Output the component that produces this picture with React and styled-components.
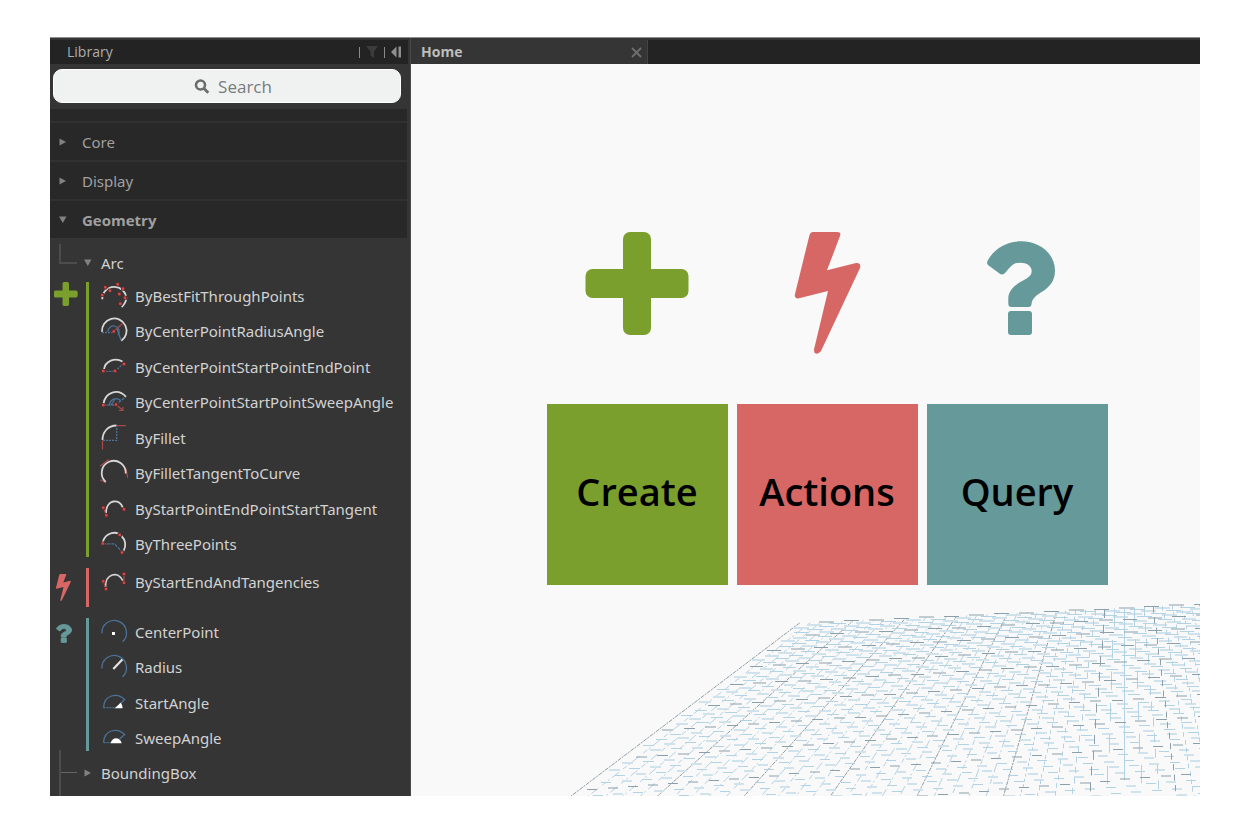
import React from 'react';
import styled, { createGlobalStyle } from 'styled-components';

const GREEN = '#7b9f2d';
const RED = '#d66765';
const TEAL = '#66999a';

const GlobalStyle = createGlobalStyle`
  *, *::before, *::after { box-sizing: border-box; }
  body {
    margin: 0;
    background: #fff;
    font-family: "Open Sans", "Noto Sans", sans-serif;
  }
  button { font: inherit; color: inherit; background: none; border: 0; padding: 0; cursor: pointer; }
  ul { list-style: none; margin: 0; padding: 0; }
  svg { display: block; }
`;

const Page = styled.div`
  min-height: 100vh;
  padding: 37px 50px;
  display: flex;
`;

const AppWindow = styled.div`
  flex: 1;
  display: grid;
  grid-template-columns: 361px minmax(0, 1fr);
  border-top: 1px solid #8f8f8f;
  background: #353535;
  overflow: hidden;
`;

const Sidebar = styled.aside`
  padding-top: 2px;
  border-right: 1px solid #4a4a4a;
  color: #d2d2d2;
  font-family: "Noto Sans", "Open Sans", sans-serif;
  font-size: 15px;
  line-height: 20px;
`;

const SidebarBar = styled.header`
  height: 24px;
  margin-right: 2px;
  padding: 0 6px 0 17px;
  display: flex;
  align-items: center;
  justify-content: space-between;
  background: #232323;
  color: #adadad;
`;

const BarTitle = styled.h1`
  margin: 0;
  font-family: "Open Sans", sans-serif;
  font-size: 14px;
  font-weight: 400;
`;

const BarTools = styled.div`
  display: flex;
  align-items: center;
  gap: 5px;
`;

const Divider = styled.span`
  width: 1px;
  height: 11px;
  background: #8a8a8a;
`;

const SearchZone = styled.div`
  height: 45px;
  padding: 5px 9px 6px 3px;
`;

const SearchBox = styled.label`
  height: 34px;
  padding: 1px 0 0 12px;
  display: flex;
  align-items: center;
  justify-content: center;
  gap: 8px;
  border: 1px solid #fff;
  border-radius: 9px;
  background: #f0f2f1;
`;

const SearchInput = styled.input`
  field-sizing: content;
  min-width: 52px;
  padding: 0;
  border: 0;
  outline: 0;
  background: none;
  font: 17px/24px "Open Sans", sans-serif;
  color: #6f7476;
  &::placeholder { color: #777b7d; opacity: 1; }
`;

const Sections = styled.div`
  margin-right: 3px;
  padding-top: 12px;
  background: #282828;
`;

const SectionButton = styled.button`
  width: 100%;
  height: 39px;
  padding: 0 0 0 8px;
  display: flex;
  align-items: center;
  gap: 14px;
  border-top: 2px solid #313131;
  color: #a0a0a0;
  && {
    font-family: ${p => (p.$open ? '"Open Sans", sans-serif' : 'inherit')};
    font-weight: ${p => (p.$open ? 700 : 400)};
  }
`;

const TreeRow = styled.div`
  height: ${p => (p.$last ? 39 : 40)}px;
  padding: ${p => (p.$last ? '0 0 6px 9px' : '10px 0 0 9px')};
  display: flex;
  align-items: center;
`;

const ElbowLine = styled.span`
  width: 18px;
  height: 20px;
  margin-bottom: 18px;
  border-left: 2px solid #4c4c4c;
  border-bottom: 2px solid #4c4c4c;
`;

const BranchLine = styled.span`
  width: 18px;
  height: 46px;
  flex: none;
  display: flex;
  align-items: center;
  border-left: 2px solid #4c4c4c;
  &::before { content: ""; flex: 1; height: 1px; background: #666; }
`;

const TreeButton = styled.button`
  padding-left: 6px;
  display: flex;
  align-items: center;
  gap: 8px;
`;

const Groups = styled.div`
  display: flex;
  flex-direction: column;
  gap: 2px;
`;

const Group = styled.section`
  display: grid;
  grid-template-columns: 36px 3px 1fr;
  min-height: 48px;
`;

const Mark = styled.div`
  padding: ${p => p.$top}px 0 0 ${p => p.$left}px;
`;

const GroupBar = styled.span`
  margin: 4px 0 5px;
  background: ${p => p.$color};
`;

const NodeList = styled.ul`
  height: ${p => p.$height}px;
  padding-left: 12px;
  display: flex;
  flex-direction: column;
`;

const NodeItem = styled.li`
  flex: 1;
  display: flex;
`;

const NodeButton = styled.button`
  display: flex;
  align-items: center;
  gap: 8px;
  white-space: nowrap;
`;

const Main = styled.main`
  padding-top: 2px;
  display: flex;
  flex-direction: column;
`;

const TabStrip = styled.nav`
  height: 24px;
  display: flex;
  background: #232323;
`;

const Tab = styled.div`
  width: 237px;
  padding: 0 5px 0 10px;
  display: flex;
  align-items: center;
  justify-content: space-between;
  border-right: 1px solid #444;
  background: #353535;
  color: #bdbdbd;
  font-size: 14px;
  line-height: 20px;
  font-weight: 700;
`;

const Workspace = styled.div`
  flex: 1;
  display: flex;
  flex-direction: column;
  justify-content: space-between;
  background: #f9f9f9;
`;

const Categories = styled.div`
  padding: 168px 0 15px 43px;
  display: flex;
  justify-content: center;
  gap: 9px;
`;

const Category = styled.div`
  display: flex;
  flex-direction: column;
  gap: 50px;
`;

const Tile = styled.div`
  width: 181px;
  height: 181px;
  display: flex;
  align-items: center;
  justify-content: center;
  padding-bottom: 8px;
  background: ${p => p.$color};
  color: #000;
  font-size: 38px;
  font-weight: 600;
`;

/* The three category symbols, each drawn on a 181 x 122 field. */
const SYMBOLS = {
  create: {
    color: GREEN,
    tight: '39 0 104 103',
    shape: (
      <>
        <rect x="76" y="0" width="28" height="103" rx="7" />
        <rect x="38.5" y="37" width="103" height="29" rx="7" />
      </>
    ),
  },
  actions: {
    color: RED,
    tight: '58 0 66 122',
    shape: (
      <path d="M76 0H100Q104.5 0 103 4L90 38.3L119 31Q124.5 30.5 123 36L84 119Q82 121.7 79.5 121.7Q76.5 121 77 117.5L91 59L61 66.5Q57 66 58 62L72.5 3Q73.5 0 76 0Z" />
    ),
  },
  query: {
    color: TEAL,
    tight: '58 7 72 98',
    outline: 4,
    shape: (
      <>
        <path d="M60.5 29C66 18 78 9.3 94.3 9.3C112 9.3 128 21 128 38.7C128 49 122.5 55.5 113 61C107 65 105 68 104.7 71.3Q104.5 75 101.5 75H84.5Q81.3 75 81.3 71.5V66.3C81.3 60 85.5 55.5 91 51.5C97 47 104.7 46 104.7 39C104.7 34 100 30.7 93 30.7C87.5 30.7 84.5 33 78.5 40.5Q75.5 44 72.5 41.5L61 33Q59.5 31.5 60.5 29Z" />
        <rect x="81" y="79" width="24" height="24" rx="3" />
      </>
    ),
  },
};

const Symbol = ({ kind }) => (
  <svg width="181" height="122" viewBox="0 0 181 122" fill={SYMBOLS[kind].color} aria-hidden="true">
    {SYMBOLS[kind].shape}
  </svg>
);

const SmallSymbol = ({ kind, width, height }) => (
  <svg
    width={width}
    height={height}
    viewBox={SYMBOLS[kind].tight}
    preserveAspectRatio="none"
    fill={SYMBOLS[kind].color}
    stroke={SYMBOLS[kind].color}
    strokeWidth={SYMBOLS[kind].outline || 0}
    aria-hidden="true"
  >
    {SYMBOLS[kind].shape}
  </svg>
);

const Caret = ({ open }) => (
  <svg width="10" height="10" viewBox="0 0 10 10" fill="#828282" aria-hidden="true">
    {open ? <path d="M1 1.5H8.5L4.8 8Z" /> : <path d="M1.5 1.5L8 5L1.5 8.5Z" />}
  </svg>
);

/* Pieces shared by the node icons */
const White = ({ d }) => <path d={d} stroke="#d6d6d6" strokeWidth="1.8" />;
const Blue = ({ d, dash }) => <path d={d} stroke="#4c7299" strokeWidth="1.3" strokeDasharray={dash} />;
const RedLine = ({ d }) => <path d={d} stroke="#a94a4a" strokeWidth="1.2" />;
const Dots = ({ at }) => at.map(([x, y]) => (
  <g key={`${x} ${y}`}>
    <rect x={x - 2} y={y - 2} width="4" height="4" fill="#5a2b2b" />
    <rect x={x - 1.2} y={y - 1.2} width="2.4" height="2.4" fill="#d34b4b" />
  </g>
));

const BIG_ARC = 'M.9 15.5A12.3 12.3 0 1 1 21.5 23.8';

const NODE_ICONS = {
  bestFit: (
    <>
      <path d="M1.3 17.3A12 12 0 0 1 25.3 16.3Q25 21 20.7 25" stroke="#d6d6d6" strokeWidth="1.8" />
      <Dots at={[[1.3, 13], [4.3, 5.3], [9, 8.7], [16.7, 2.3], [22, 6.7], [18.3, 12], [24, 15.7], [19.3, 21.7]]} />
    </>
  ),
  radiusAngle: (
    <>
      <White d="M1 14.8A12.3 12.3 0 1 1 20.3 23.8" />
      <Blue d="M7 14.5A5.6 5.6 0 1 1 17 18" />
      <Blue d="M1 15.5H12.5" dash="2 1" />
      <Blue d="M16 12L20 23" />
      <RedLine d="M12.7 14.2L21.7 6.5" />
      <Dots at={[[12.7, 14.5]]} />
    </>
  ),
  startEnd: (
    <>
      <White d="M3 16.5C4 8 14 4 21.5 8.5" />
      <Blue d="M2.3 18.3H14L22 11" dash="2 1" />
      <Dots at={[[2.3, 18], [14, 18], [23, 11]]} />
    </>
  ),
  startSweep: (
    <>
      <White d="M2.5 16C4 4 17 0 25 8.8" />
      <Blue d="M8.5 16.5A6.5 6.5 0 0 1 19.5 12.5" />
      <Blue d="M2.5 17H14.5L24.5 9" dash="3 1" />
      <Blue d="M10 17L14 11" />
      <RedLine d="M15 16.5L22 22.5M22 18.8V22.5H18" />
      <Dots at={[[2.3, 17.2], [15, 16.5]]} />
    </>
  ),
  fillet: (
    <>
      <White d="M1.5 16C1.5 8 7 1.5 15.5 1.5" />
      <Blue d="M2 16.3H15.7V2" dash="2 1" />
      <RedLine d="M1.5 16.5V25.5M15.5 1.7H25" />
    </>
  ),
  filletTangent: (
    <>
      <RedLine d="M-1 7.2L7.7 .5M25 9.8L26.7 18.8M-1 20.8L4.7 23.8" />
      <White d="M4.7 22.8A12 12 0 1 1 24.7 14.5" />
    </>
  ),
  startTangent: (
    <>
      <White d="M5 18C5 4 19 3 22 13" />
      <RedLine d="M2.3 12.7L5.3 20.3" />
      <Dots at={[[23, 14.3], [5.3, 20.3], [2.3, 12.7]]} />
    </>
  ),
  threePoints: (
    <>
      <White d="M1.8 12A12 12 0 0 1 17.5 3.5M20.5 6A12 12 0 0 1 22.5 21" />
      <Blue d="M2.3 13.8H13.3L20.7 21.2" dash="3 1" />
      <Dots at={[[1.7, 13.5], [18.7, 4.8], [21, 22.5]]} />
    </>
  ),
  tangencies: (
    <>
      <White d="M4.5 19C4 6 17 2 22 13" />
      <RedLine d="M2.3 13.3L5 21M23 6V14.7" />
      <Dots at={[[23, 6], [23, 14.7], [2.3, 13.3], [5, 21]]} />
    </>
  ),
  center: (
    <>
      <Blue d={BIG_ARC} />
      <rect x="11" y="14" width="3" height="3" fill="#fff" />
    </>
  ),
  radius: (
    <>
      <Blue d={BIG_ARC} />
      <path d="M12.3 15.9L21.3 6.5" stroke="#e3e3e3" strokeWidth="2.2" />
    </>
  ),
  startAngle: (
    <>
      <Blue d="M2.5 18.5C3 6 16 3 23.7 10.5L18.5 15.5" />
      <Blue d="M2.5 18.7H15" dash="2 1" />
      <path d="M13.7 19.3L19.7 13.7Q21.7 16 21.7 19.3Z" fill="#fff" />
    </>
  ),
  sweepAngle: (
    <>
      <Blue d="M2.5 18.5C3 6 16 3 23.7 10.5L18.5 15" />
      <Blue d="M2.5 18.7H11" dash="2 1" />
      <path d="M9.7 19.3C11 12.5 19 12.5 20.7 19.3Z" fill="#fff" />
    </>
  ),
};

const NodeIcon = ({ name }) => (
  <svg width="26" height="30" viewBox="0 -1 26 30" fill="none" overflow="visible" aria-hidden="true">
    {NODE_ICONS[name]}
  </svg>
);

const GROUPS = [
  {
    kind: 'create', color: GREEN, height: 284, mark: { top: 4, left: 4, width: 24, height: 24 },
    nodes: [
      ['bestFit', 'ByBestFitThroughPoints'],
      ['radiusAngle', 'ByCenterPointRadiusAngle'],
      ['startEnd', 'ByCenterPointStartPointEndPoint'],
      ['startSweep', 'ByCenterPointStartPointSweepAngle'],
      ['fillet', 'ByFillet'],
      ['filletTangent', 'ByFilletTangentToCurve'],
      ['startTangent', 'ByStartPointEndPointStartTangent'],
      ['threePoints', 'ByThreePoints'],
    ],
  },
  {
    kind: 'actions', color: RED, height: 36, mark: { top: 10, left: 6, width: 15, height: 27 },
    nodes: [['tangencies', 'ByStartEndAndTangencies']],
  },
  {
    kind: 'query', color: TEAL, height: 142, mark: { top: 10, left: 6, width: 16, height: 19 },
    nodes: [
      ['center', 'CenterPoint'],
      ['radius', 'Radius'],
      ['startAngle', 'StartAngle'],
      ['sweepAngle', 'SweepAngle'],
    ],
  },
];

/* Ground plane: two families of lines running to vanishing points on one horizon,
   every fifth line darker, each broken into short strokes. */
const HORIZON = 377;
const AXIS_X = 1124.5;
const SPREAD = 0.04127;
const SIDE_X = 5980;
const EDGE = -32;

function buildGrid() {
  const paths = { light: '', pale: '', dark: '', diagonals: [] };
  const edgeX = y => AXIS_X + EDGE * SPREAD * (y - HORIZON);

  for (let n = 0; n < 64; n += 1) {
    const y0 = HORIZON + 1 / (0.004065 - 0.0000411 * n);
    const x0 = edgeX(y0);
    const slope = (y0 - HORIZON) / (SIDE_X - x0);
    const period = 25 - Math.min(n, 40) * 0.12;
    const drop = period * slope;
    const on = 15 - Math.min(n, 40) * 0.12;
    for (let m = Math.floor(y0 / drop); m > 0; m -= 1) {
      const y = m * drop;
      const x = x0 + (y0 - y) / slope;
      if (x > 1200) break;
      if (y > 797 || x < 411) continue;
      const soft = m % 2 === 0;
      const key = n % 5 === 0 ? 'dark' : soft ? 'pale' : 'light';
      const row = soft ? Math.round(y) : Math.floor(y) + 0.5;
      paths[key] += `M${Math.round(x)} ${row}h${Math.round(on)}`;
    }
  }

  for (let k = EDGE; k <= 9; k += 1) {
    const top = 608 + 15 * (k / EDGE);
    const at = y => AXIS_X + k * SPREAD * (y - HORIZON);
    const dark = (k - EDGE) % 5 === 0;
    if (k === 0) {
      paths.light += `M${AXIS_X} 609V780`;
    } else if (Math.abs(k) < 7) {
      const period = 1.3 / (Math.abs(k) * SPREAD);
      const key = dark ? 'dark' : 'light';
      for (let y = top; y < 797; y += period) {
        paths[key] += `M${Math.floor(at(y + period / 2)) + 0.5} ${y.toFixed(1)}v${(period * 0.58).toFixed(1)}`;
      }
    } else {
      paths.diagonals.push({
        k, dark, d: `M${at(top).toFixed(1)} ${top.toFixed(1)}L${at(797).toFixed(1)} 797`,
      });
    }
  }
  return paths;
}

const grid = buildGrid();

const GroundPlane = () => (
  <svg width="100%" viewBox="411 600 789 196" fill="none" aria-hidden="true">
    {grid.diagonals.map(line => (
      <path
        key={line.k}
        d={line.d}
        stroke={line.dark ? '#8d9ca4' : '#b4d2e4'}
        strokeDasharray={line.dark ? '4 1 2 1' : '9 3 2 2 5 5'}
        strokeDashoffset={line.k * 7}
      />
    ))}
    <path d={grid.pale} stroke="#d0e2ec" strokeWidth="2" />
    <path d={grid.light} stroke="#b2d2e5" />
    <path d={grid.dark} stroke="#8ba0ab" />
  </svg>
);

const LibraryTree = () => (
  <>
    <TreeRow>
      <ElbowLine />
      <TreeButton type="button"><Caret open />Arc</TreeButton>
    </TreeRow>
    <Groups>
      {GROUPS.map(g => (
        <Group key={g.kind}>
          <Mark $top={g.mark.top} $left={g.mark.left}>
            <SmallSymbol kind={g.kind} width={g.mark.width} height={g.mark.height} />
          </Mark>
          <GroupBar $color={g.color} />
          <NodeList $height={g.height}>
            {g.nodes.map(([icon, label]) => (
              <NodeItem key={label}>
                <NodeButton type="button"><NodeIcon name={icon} />{label}</NodeButton>
              </NodeItem>
            ))}
          </NodeList>
        </Group>
      ))}
    </Groups>
    <TreeRow $last>
      <BranchLine />
      <TreeButton type="button"><Caret />BoundingBox</TreeButton>
    </TreeRow>
  </>
);

export default function App() {
  return (
    <>
      <GlobalStyle />
      <Page>
        <AppWindow>
          <Sidebar>
            <SidebarBar>
              <BarTitle>Library</BarTitle>
              <BarTools>
                <Divider />
                <button type="button" aria-label="Filter">
                  <svg width="14" height="12" viewBox="0 0 14 12" fill="#3c3c3c"><path d="M1 0H13L9 5.5V12L5.5 9.5V5.5Z" /></svg>
                </button>
                <Divider />
                <button type="button" aria-label="Collapse library">
                  <svg width="12" height="12" viewBox="0 0 12 12" fill="#8f8f8f"><path d="M6.5 .5V11.5L1 6ZM8.5 .5H11V11.5H8.5Z" /></svg>
                </button>
              </BarTools>
            </SidebarBar>
            <SearchZone>
              <SearchBox>
                <svg width="16" height="16" viewBox="0 0 16 16" fill="none" stroke="#6c6c6c" aria-hidden="true">
                  <circle cx="6.5" cy="6" r="4.5" strokeWidth="2.6" />
                  <path d="M9.7 9.2L14.3 13.8" strokeWidth="2.8" />
                </svg>
                <SearchInput type="text" placeholder="Search" aria-label="Search" />
              </SearchBox>
            </SearchZone>
            <Sections>
              <SectionButton type="button"><Caret />Core</SectionButton>
              <SectionButton type="button"><Caret />Display</SectionButton>
              <SectionButton type="button" $open><Caret open />Geometry</SectionButton>
            </Sections>
            <LibraryTree />
          </Sidebar>
          <Main>
            <TabStrip>
              <Tab>
                <span>Home</span>
                <button type="button" aria-label="Close Home">
                  <svg width="11" height="11" viewBox="0 0 11 11" stroke="#6e6e6e" strokeWidth="1.8"><path d="M1 1L10 10M10 1L1 10" /></svg>
                </button>
              </Tab>
            </TabStrip>
            <Workspace>
              <Categories>
                <Category><Symbol kind="create" /><Tile $color={GREEN}>Create</Tile></Category>
                <Category><Symbol kind="actions" /><Tile $color={RED}>Actions</Tile></Category>
                <Category><Symbol kind="query" /><Tile $color={TEAL}>Query</Tile></Category>
              </Categories>
              <GroundPlane />
            </Workspace>
          </Main>
        </AppWindow>
      </Page>
    </>
  );
}
